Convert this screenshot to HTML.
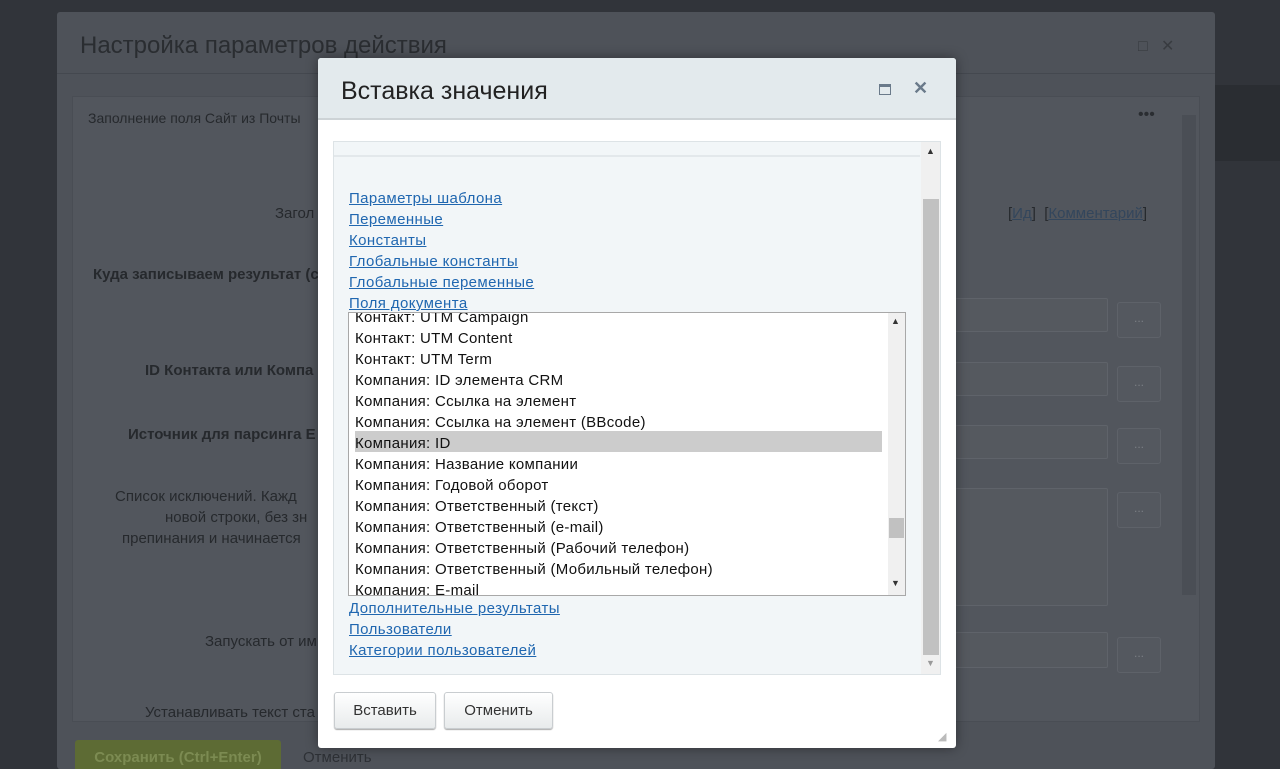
<!DOCTYPE html>
<html><head><meta charset="utf-8"><style>
*{margin:0;padding:0;box-sizing:border-box}
html,body{width:1280px;height:769px;overflow:hidden}
body{background:#31343a;font-family:"Liberation Sans",sans-serif;position:relative}
.a{position:absolute}
.outer{left:57px;top:12px;width:1158px;height:757px;background:#4e5259;border-radius:3px}
.lab{position:absolute;color:#26292d;font-size:15px;white-space:nowrap}
.fld{position:absolute;background:#55595f;border:1px solid #5f636a;border-radius:2px}
.btnd{position:absolute;width:44px;height:36px;background:#54585f;border:1px solid #5e6269;border-radius:3px;color:#7a7e84;text-align:center;font-size:12px;line-height:30px}
.modal{left:318px;top:58px;width:638px;height:690px;background:#fff;border-radius:3px;box-shadow:0 0 12px rgba(0,0,0,.4)}
.hdr{position:absolute;left:0;top:0;width:638px;height:62px;background:#e3eaed;border-bottom:2px solid #cdd3d6;border-radius:3px 3px 0 0}
.lnk{position:absolute;left:349px;color:#2067b0;text-decoration:underline;font-size:15px;line-height:21px;letter-spacing:.4px}
.it{position:absolute;left:355px;font-size:15px;color:#111;line-height:21px;white-space:nowrap;letter-spacing:.3px}
.btn{position:absolute;top:692px;height:37px;background:linear-gradient(#fff,#e8ebec);border:1px solid #c9cdd0;border-radius:3px;box-shadow:0 1px 1px #aaa;font-size:15px;color:#333;text-align:center;line-height:35px}
</style></head><body>
<div class="a" style="left:1215px;top:85px;width:65px;height:76px;background:#2a2d32"></div>
<div class="a outer"></div>
<div class="a" style="left:57px;top:73px;width:1158px;height:1px;background:#44484f"></div>
<div class="lab" style="left:80px;top:32px;font-size:24px;color:#2a2d31">Настройка параметров действия</div>
<div class="lab" style="left:1138px;top:36px;font-size:16px;color:#383b40">□&nbsp;&nbsp;&nbsp;✕</div>
<div class="a" style="left:72px;top:96px;width:1128px;height:626px;background:#52565d;border:1px solid #494d54"></div>
<div class="a" style="left:1182px;top:115px;width:14px;height:480px;background:#4a4e55"></div>
<div class="lab" style="left:88px;top:110px;font-size:14px">Заполнение поля Сайт из Почты</div>
<div class="lab" style="left:1138px;top:106px;font-size:16px;color:#2a2d31">•••</div>
<div class="lab" style="left:275px;top:205px">Загол</div>
<div class="lab" style="left:93px;top:266px;font-weight:bold">Куда записываем результат (с</div>
<div class="lab" style="left:145px;top:362px;font-weight:bold">ID Контакта или Компа</div>
<div class="lab" style="left:128px;top:426px;font-weight:bold">Источник для парсинга E</div>
<div class="lab" style="left:115px;top:488px">Список исключений. Кажд</div>
<div class="lab" style="left:165px;top:509px">новой строки, без зн</div>
<div class="lab" style="left:122px;top:530px">препинания и начинается</div>
<div class="lab" style="left:205px;top:633px">Запускать от им</div>
<div class="lab" style="left:145px;top:704px">Устанавливать текст ста</div>
<div class="lab" style="left:1008px;top:205px">[<u style="color:#33465c">Ид</u>]&nbsp;&nbsp;[<u style="color:#33465c">Комментарий</u>]</div>
<div class="fld" style="left:955px;top:298px;width:153px;height:34px"></div>
<div class="fld" style="left:955px;top:362px;width:153px;height:34px"></div>
<div class="fld" style="left:955px;top:425px;width:153px;height:34px"></div>
<div class="fld" style="left:955px;top:488px;width:153px;height:118px"></div>
<div class="fld" style="left:955px;top:632px;width:153px;height:36px"></div>
<div class="btnd" style="left:1117px;top:302px">...</div>
<div class="btnd" style="left:1117px;top:366px">...</div>
<div class="btnd" style="left:1117px;top:428px">...</div>
<div class="btnd" style="left:1117px;top:492px">...</div>
<div class="btnd" style="left:1117px;top:637px">...</div>
<div class="a" style="left:75px;top:740px;width:206px;height:40px;background:#5d6b34;border-radius:3px;color:#7c8b52;font-size:15px;font-weight:bold;line-height:36px;text-align:center">Сохранить (Ctrl+Enter)</div>
<div class="lab" style="left:303px;top:749px;color:#2e3136">Отменить</div>

<div class="a modal">
 <div class="hdr"></div>
 <div class="a" style="left:23px;top:19px;font-size:25px;color:#222">Вставка значения</div>
 <div class="a" style="left:561px;top:26px;width:12px;height:11px;border:1.5px solid #6a7a8a;border-top-width:3px"></div>
 <div class="a" style="left:595px;top:20px;font-size:18px;color:#6a7a8a;font-weight:bold">✕</div>
</div>
<div class="a" style="left:333px;top:141px;width:608px;height:534px;background:#f2f6f8;border:1px solid #dde3e6"></div>
<div class="a" style="left:334px;top:155px;width:586px;height:2px;background:#e3e8eb"></div>
<div class="a" style="left:921px;top:142px;width:19px;height:532px;background:#f0f0f0"></div>
<div class="a" style="left:923px;top:199px;width:16px;height:456px;background:#c1c1c1"></div>
<div class="a" style="left:926px;top:146px;font-size:9px;color:#333">▲</div>
<div class="a" style="left:926px;top:658px;font-size:9px;color:#999">▼</div>
<div class="lnk" style="top:188px">Параметры шаблона</div>
<div class="lnk" style="top:209px">Переменные</div>
<div class="lnk" style="top:230px">Константы</div>
<div class="lnk" style="top:251px">Глобальные константы</div>
<div class="lnk" style="top:272px">Глобальные переменные</div>
<div class="lnk" style="top:293px">Поля документа</div>
<div class="a" style="left:348px;top:312px;width:558px;height:284px;background:#fff;border:1px solid #a8a8a8;overflow:hidden">
 <div style="position:absolute;left:539px;top:0;width:17px;height:282px;background:#f0f0f0"></div>
 <div style="position:absolute;left:540px;top:205px;width:15px;height:20px;background:#c1c1c1"></div>
 <div style="position:absolute;left:542px;top:3px;font-size:9px;color:#333">▲</div>
 <div style="position:absolute;left:542px;top:265px;font-size:9px;color:#333">▼</div>
 <div style="position:absolute;left:6px;top:118px;width:527px;height:21px;background:#cccccc"></div>
</div>
<div class="a" style="left:349px;top:313px;width:538px;height:282px;overflow:hidden">
<div class="it" style="left:6px;top:-6px">Контакт: UTM Campaign</div>
<div class="it" style="left:6px;top:15px">Контакт: UTM Content</div>
<div class="it" style="left:6px;top:36px">Контакт: UTM Term</div>
<div class="it" style="left:6px;top:57px">Компания: ID элемента CRM</div>
<div class="it" style="left:6px;top:78px">Компания: Ссылка на элемент</div>
<div class="it" style="left:6px;top:99px">Компания: Ссылка на элемент (BBcode)</div>
<div class="it" style="left:6px;top:120px">Компания: ID</div>
<div class="it" style="left:6px;top:141px">Компания: Название компании</div>
<div class="it" style="left:6px;top:162px">Компания: Годовой оборот</div>
<div class="it" style="left:6px;top:183px">Компания: Ответственный (текст)</div>
<div class="it" style="left:6px;top:204px">Компания: Ответственный (e-mail)</div>
<div class="it" style="left:6px;top:225px">Компания: Ответственный (Рабочий телефон)</div>
<div class="it" style="left:6px;top:246px">Компания: Ответственный (Мобильный телефон)</div>
<div class="it" style="left:6px;top:267px">Компания: E-mail</div>
</div>
<div class="lnk" style="top:598px">Дополнительные результаты</div>
<div class="lnk" style="top:619px">Пользователи</div>
<div class="lnk" style="top:640px">Категории пользователей</div>
<div class="btn" style="left:334px;width:102px">Вставить</div>
<div class="btn" style="left:444px;width:109px">Отменить</div>
<div class="a" style="left:938px;top:730px;font-size:11px;color:#bbb">◢</div>
</body></html>
